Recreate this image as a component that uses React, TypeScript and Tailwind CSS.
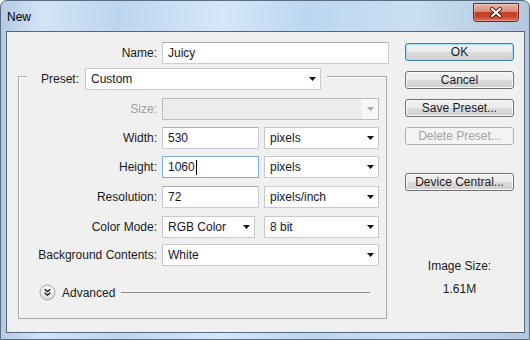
import type { ReactNode } from "react";

function Arrow({ disabled }: { disabled?: boolean }) {
  return (
    <svg width="7" height="4" viewBox="0 0 7 4">
      <path d="M0 0h7L3.5 4z" fill={disabled ? "#a8a8a8" : "#111"} />
    </svg>
  );
}

function TextBox({ value, w, focused }: { value: string; w: string; focused?: boolean }) {
  return (
    <div
      className={`flex h-[22px] items-center border bg-white pl-[5px] ${w} ${
        focused ? "border-[#78acdf]" : "border-[#c9ccd2] border-t-[#abadb3]"
      }`}
    >
      <span className="text-[#15152a]">{value}</span>
      {focused && <span className="ml-px h-[15px] w-px bg-black" />}
    </div>
  );
}

function Select({ value, w, disabled }: { value?: string; w: string; disabled?: boolean }) {
  return (
    <div
      className={`flex h-[22px] items-center border ${w} ${
        disabled ? "border-[#bcbcbc] bg-[#ececec]" : "border-[#c9c9c9] bg-white"
      }`}
    >
      <span className="flex-1 truncate pl-[5px] text-[#15152a]">{value}</span>
      <span className={`flex h-full w-[16px] items-center justify-center ${disabled ? "bg-[#f7f7f7]" : ""}`}>
        <Arrow disabled={disabled} />
      </span>
    </div>
  );
}

function Row({ label, mt, muted, children }: { label: string; mt: string; muted?: boolean; children: ReactNode }) {
  return (
    <div className={`flex items-center ${mt}`}>
      <span className={`w-[138px] text-right ${muted ? "text-[#9d9d9d]" : ""}`}>{label}</span>
      <div className="ml-[5px] flex items-center">{children}</div>
    </div>
  );
}

function Btn({ children, mt, primary, disabled }: { children: ReactNode; mt?: string; primary?: boolean; disabled?: boolean }) {
  const look = disabled
    ? "border-[#adb2b5] bg-[#f4f4f4] text-[#a3a3a3]"
    : primary
      ? "border-[#3c7fb1] bg-[linear-gradient(to_bottom,#f2f2f2_0%,#ebebeb_50%,#dddddd_50%,#cfcfcf_100%)] shadow-[inset_0_0_0_1px_#a7dcf8]"
      : "border-[#707070] bg-[linear-gradient(to_bottom,#f2f2f2_0%,#ebebeb_50%,#dddddd_50%,#cfcfcf_100%)] shadow-[inset_0_0_0_1px_#fbfbfb]";
  return (
    <div className={`flex h-[18px] items-center justify-center rounded-[3px] border leading-none ${look} ${mt ?? ""}`}>
      {children}
    </div>
  );
}

function CloseButton() {
  return (
    <div className="mr-[10px] mt-[2px] flex h-[19px] w-[46px] items-center justify-center rounded-b-[4px] border border-[#6a2418] bg-[linear-gradient(to_bottom,#e9b2a5_0%,#d98a76_45%,#c13e28_50%,#c9472f_75%,#e27358_100%)] shadow-[inset_0_0_0_1px_rgba(255,255,255,0.3)]">
      <svg width="14" height="11" viewBox="0 0 14 11">
        <path d="M3 2L11 9M11 2L3 9" stroke="#4a1a12" strokeWidth="4" strokeLinecap="round" />
        <path d="M3 2L11 9M11 2L3 9" stroke="#ffffff" strokeWidth="2.2" strokeLinecap="round" />
      </svg>
    </div>
  );
}

function AdvancedIcon() {
  return (
    <svg width="17" height="17" viewBox="0 0 17 17">
      <defs>
        <linearGradient id="adv" x1="0" y1="0" x2="0" y2="1">
          <stop offset="0" stopColor="#ffffff" />
          <stop offset="1" stopColor="#d8d8d8" />
        </linearGradient>
      </defs>
      <circle cx="8.5" cy="8.5" r="7.5" fill="url(#adv)" stroke="#a4a4a4" />
      <path d="M5.7 5.3l2.8 2.4 2.8-2.4M5.7 8.8l2.8 2.4 2.8-2.4" fill="none" stroke="#111" strokeWidth="1.4" />
    </svg>
  );
}

export default function App() {
  return (
    <div className="flex h-[340px] w-[530px] flex-col overflow-hidden rounded-t-[7px] border border-[#5b6d82] bg-[linear-gradient(to_right,#b4cbe4_0%,#d2e4f7_8%,#bdd5ef_22%,#d5e7f9_42%,#bcd6f1_58%,#cadef2_78%,#b2c7dd_100%)] font-['Liberation_Sans',Arial,sans-serif] text-[12px] text-[#1a1a1a]">
      {/* title bar */}
      <div className="flex h-[30px] shrink-0 items-start justify-between">
        <span className="ml-[6px] mt-[8px] leading-[16px] text-black">New</span>
        <CloseButton />
      </div>

      <div className="flex flex-1 pb-[6px] pl-[5px] pr-[4px]">
        <div className="flex flex-1 items-start border border-[#55677c] bg-[#f0f0f0]">
          {/* form */}
          <div className="w-[382px] shrink-0 pl-[11px] pt-[10px]">
            <div className="flex items-center">
              <span className="w-[139px] text-right">Name:</span>
              <div className="ml-[5px]">
                <TextBox value="Juicy" w="w-[227px]" />
              </div>
            </div>

            <div className="mt-[12px] h-[243px] w-[369px] border border-[#a9a9a9] shadow-[inset_1px_1px_0_#ffffff]">
              <div className="-mt-[9px] ml-[8px] flex w-fit items-center bg-[#f0f0f0] pl-[14px] pr-[6px]">
                <span className="w-[39px]">Preset:</span>
                <div className="ml-[5px]">
                  <Select value="Custom" w="w-[236px]" />
                </div>
              </div>

              <Row label="Size:" mt="mt-[8px]" muted>
                <Select w="w-[217px]" disabled />
              </Row>
              <Row label="Width:" mt="mt-[7px]">
                <TextBox value="530" w="w-[97px]" />
                <div className="ml-[5px]">
                  <Select value="pixels" w="w-[115px]" />
                </div>
              </Row>
              <Row label="Height:" mt="mt-[7px]">
                <TextBox value="1060" w="w-[97px]" focused />
                <div className="ml-[5px]">
                  <Select value="pixels" w="w-[115px]" />
                </div>
              </Row>
              <Row label="Resolution:" mt="mt-[8px]">
                <TextBox value="72" w="w-[97px]" />
                <div className="ml-[5px]">
                  <Select value="pixels/inch" w="w-[115px]" />
                </div>
              </Row>
              <Row label="Color Mode:" mt="mt-[8px]">
                <Select value="RGB Color" w="w-[93px]" />
                <div className="ml-[9px]">
                  <Select value="8 bit" w="w-[115px]" />
                </div>
              </Row>
              <Row label="Background Contents:" mt="mt-[6px]">
                <Select value="White" w="w-[217px]" />
              </Row>

              <div className="ml-[20px] mr-[16px] mt-[18px] flex h-[17px] items-center">
                <AdvancedIcon />
                <span className="ml-[6px]">Advanced</span>
                <span className="ml-[6px] h-px flex-1 bg-[#8e8e8e]" />
              </div>
            </div>
          </div>

          {/* buttons */}
          <div className="ml-[16px] flex w-[109px] flex-col pt-[11px]">
            <Btn primary>OK</Btn>
            <Btn mt="mt-[10px]">Cancel</Btn>
            <Btn mt="mt-[10px]">Save Preset...</Btn>
            <Btn mt="mt-[10px]" disabled>
              Delete Preset...
            </Btn>
            <Btn mt="mt-[28px]">Device Central...</Btn>
            <div className="mt-[68px] text-center leading-[14px]">Image Size:</div>
            <div className="mt-[9px] text-center leading-[14px]">1.61M</div>
          </div>
        </div>
      </div>
    </div>
  );
}
